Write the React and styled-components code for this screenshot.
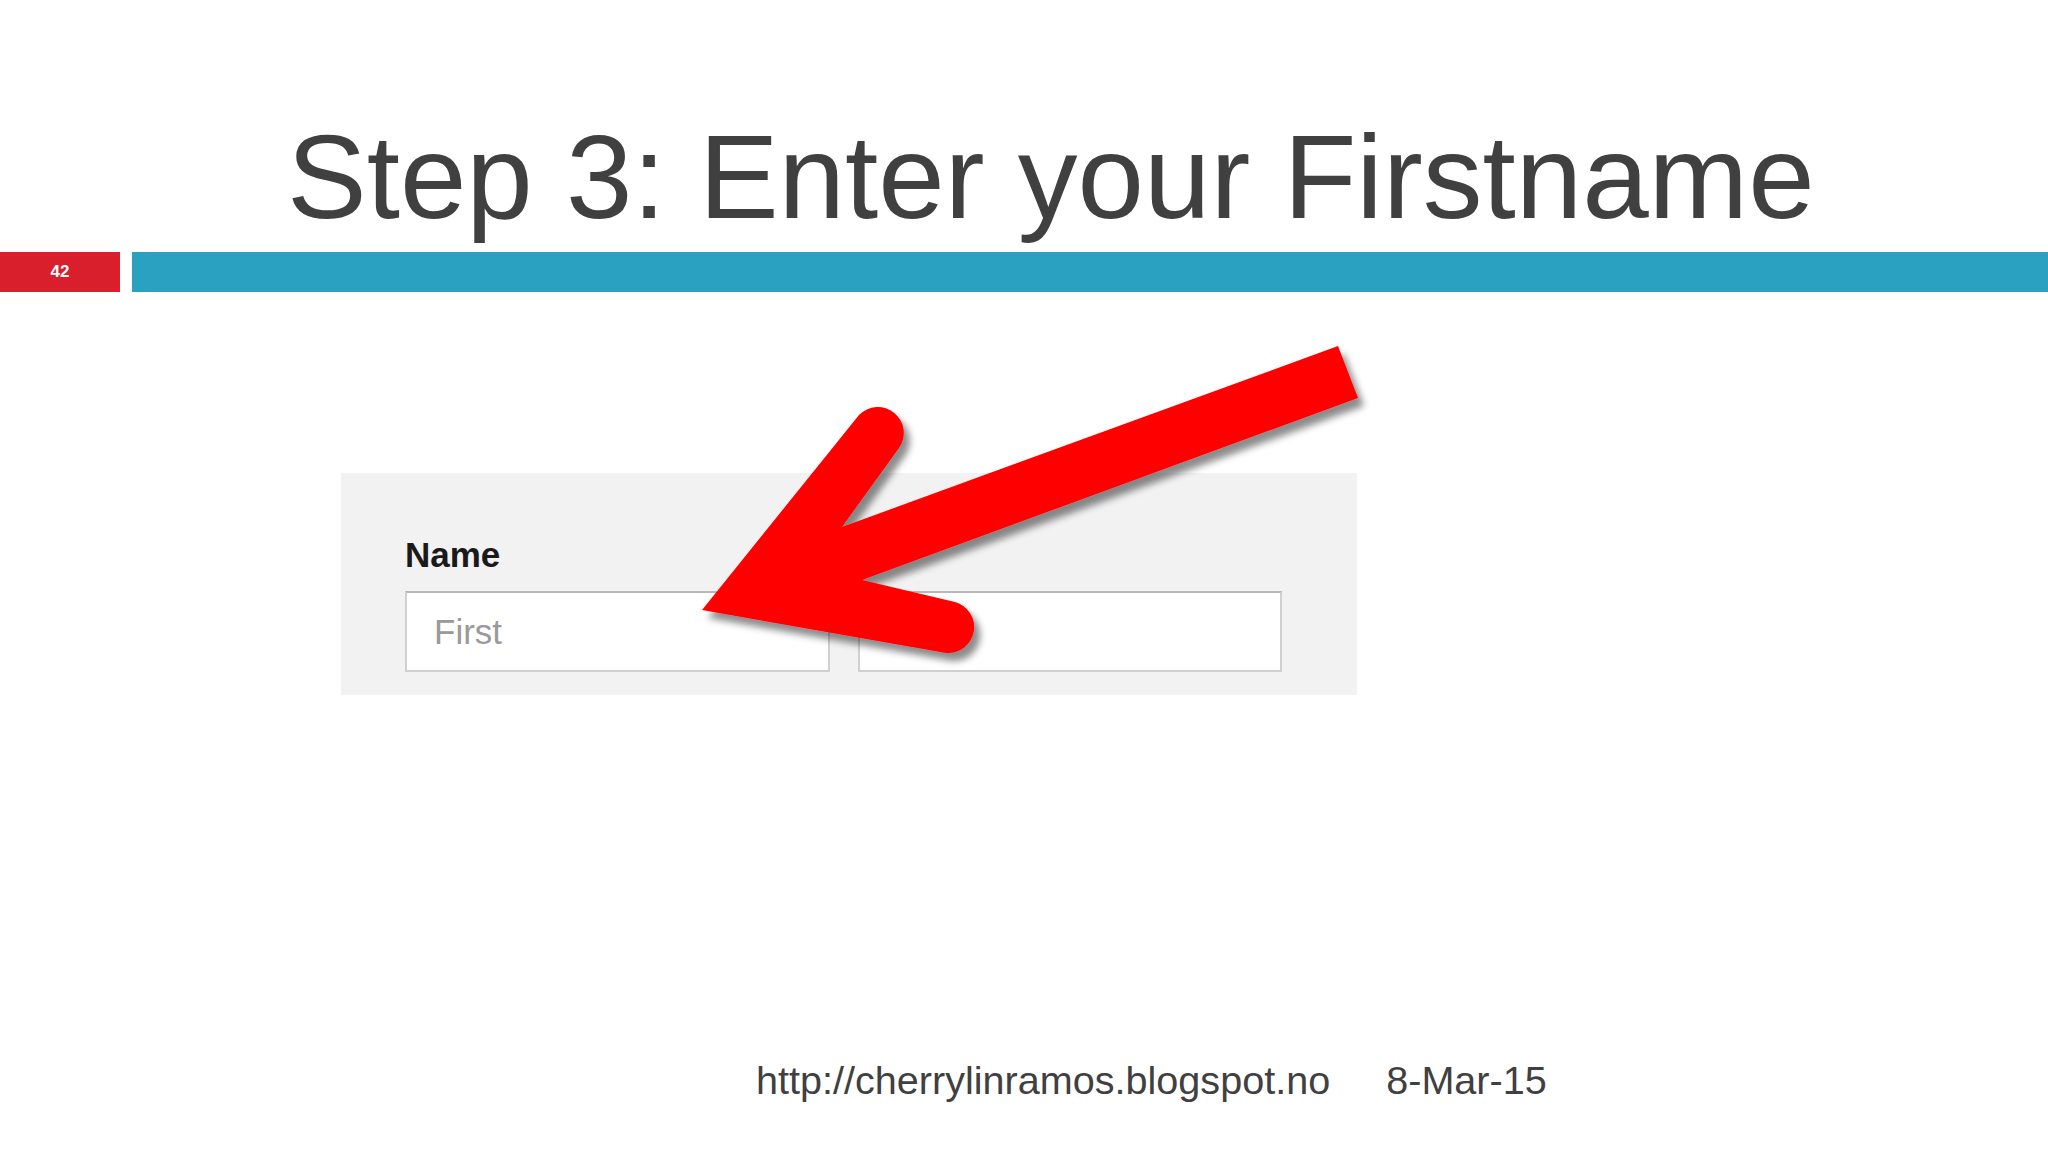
import React from "react";
import styled, { createGlobalStyle } from "styled-components";

const GlobalStyle = createGlobalStyle`
  html, body {
    margin: 0;
    padding: 0;
    background: #ffffff;
  }
  body {
    font-family: "Liberation Sans", Arial, sans-serif;
  }
`;

const Slide = styled.div`
  position: relative;
  width: 2048px;
  height: 1152px;
  display: flex;
  flex-direction: column;
  background: #ffffff;
  overflow: hidden;
`;

const TitleRow = styled.header`
  height: 252px;
  box-sizing: border-box;
  padding: 117px 0 0 287px;
`;

const Title = styled.h1`
  margin: 0;
  font-size: 119.5px;
  line-height: 119.5px;
  font-weight: 400;
  color: #404040;
  white-space: nowrap;
`;

const Rule = styled.div`
  display: flex;
  gap: 12px;
  height: 40px;
`;

const PageNumber = styled.div`
  width: 120px;
  background: #d91f2b;
  color: #ffffff;
  font-size: 17px;
  font-weight: 700;
  display: flex;
  align-items: center;
  justify-content: center;
`;

const RuleBar = styled.div`
  flex: 1;
  background: #2ba1c1;
`;

const Main = styled.main`
  flex: 1;
  padding: 181px 0 0 341px;
`;

const FormPanel = styled.section`
  width: 1016px;
  height: 222px;
  box-sizing: border-box;
  background: #f2f2f2;
  padding: 64px 0 0 64px;
`;

const Label = styled.div`
  font-size: 35px;
  line-height: 35px;
  font-weight: 700;
  color: #1a1a1a;
  margin-bottom: 19px;
`;

const Fields = styled.div`
  display: flex;
  gap: 28px;
`;

const Field = styled.input`
  width: ${(p) => p.$w}px;
  height: 81px;
  box-sizing: border-box;
  border: 2px solid #d0d0d0;
  border-top-color: #b8b8b8;
  background: #ffffff;
  padding: 0 0 0 27px;
  margin: 0;
  font-family: "Liberation Sans", Arial, sans-serif;
  font-size: 35px;
  color: #333333;
  outline: none;
  &::placeholder {
    color: #9a9a9a;
  }
`;

const Footer = styled.footer`
  display: flex;
  gap: 56px;
  padding: 0 0 52px 756px;
  font-size: 39.6px;
  line-height: 40px;
  color: #404040;
`;

const ArrowLayer = styled.svg`
  position: absolute;
  left: 0;
  top: 0;
  width: 2048px;
  height: 1152px;
  pointer-events: none;
`;

function Arrow() {
  const d = [
    "M 702 610",
    "L 859 415",
    "A 26 26 0 0 1 899 448",
    "L 842 527",
    "L 1338 346",
    "L 1358 398",
    "L 862 580",
    "L 955 602",
    "A 26 26 0 0 1 946 653",
    "Z",
  ].join(" ");
  return (
    <ArrowLayer viewBox="0 0 2048 1152">
      <defs>
        <filter id="arrowShadow" x="-10%" y="-10%" width="130%" height="130%">
          <feDropShadow dx="6" dy="8" stdDeviation="3.5" floodColor="#000" floodOpacity="0.45" />
        </filter>
      </defs>
      <path d={d} fill="#ff0000" strokeLinejoin="round" filter="url(#arrowShadow)" />
    </ArrowLayer>
  );
}

export default function App() {
  return (
    <>
      <GlobalStyle />
      <Slide>
        <TitleRow>
          <Title>Step 3: Enter your Firstname</Title>
        </TitleRow>
        <Rule>
          <PageNumber>42</PageNumber>
          <RuleBar />
        </Rule>
        <Main>
          <FormPanel>
            <Label>Name</Label>
            <Fields>
              <Field $w={425} placeholder="First" readOnly />
              <Field $w={424} readOnly />
            </Fields>
          </FormPanel>
        </Main>
        <Footer>
          <span>http://cherrylinramos.blogspot.no</span>
          <span>8-Mar-15</span>
        </Footer>
        <Arrow />
      </Slide>
    </>
  );
}
